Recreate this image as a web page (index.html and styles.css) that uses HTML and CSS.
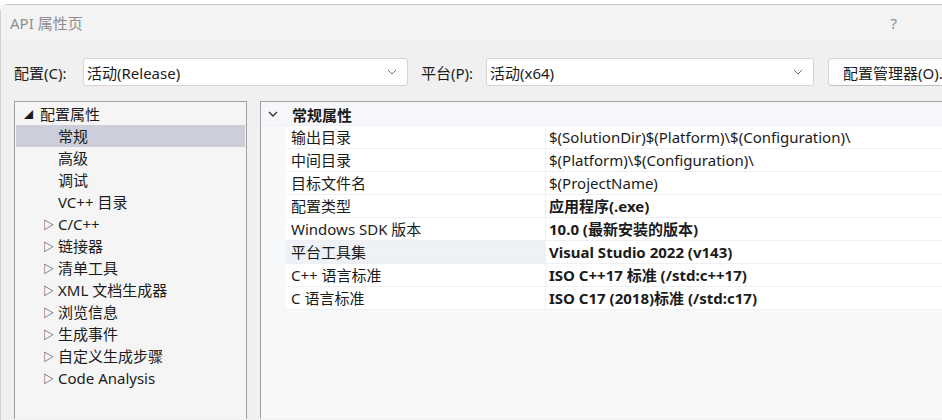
FILE: index.html
```html
<!DOCTYPE html>
<html lang="zh-CN">
<head>
    <meta charset="UTF-8">
    <title>API 属性页</title>
    <link rel="stylesheet" href="styles.css">
</head>
<body>
    <div class="window">
        <div class="titlebar">
            <span class="title">API 属性页</span>
            <span class="help">?</span>
        </div>

        <div class="config-row">
            <label class="field-label">配置(C):</label>
            <div class="combo combo-config">
                <span>活动(Release)</span>
                <svg class="chevron" width="10" height="6" viewBox="0 0 10 6"><path d="M1 1 L5 5 L9 1" fill="none" stroke="#707070" stroke-width="1"/></svg>
            </div>
            <label class="field-label">平台(P):</label>
            <div class="combo combo-platform">
                <span>活动(x64)</span>
                <svg class="chevron" width="10" height="6" viewBox="0 0 10 6"><path d="M1 1 L5 5 L9 1" fill="none" stroke="#707070" stroke-width="1"/></svg>
            </div>
            <button class="manager-button">配置管理器(O)...</button>
        </div>

        <div class="panels">
            <div class="tree">
                <div class="tree-item root"><span class="arrow-open">◢</span>配置属性</div>
                <div class="tree-item leaf selected">常规</div>
                <div class="tree-item leaf">高级</div>
                <div class="tree-item leaf">调试</div>
                <div class="tree-item leaf">VC++ 目录</div>
                <div class="tree-item node"><span class="arrow-closed">▷</span>C/C++</div>
                <div class="tree-item node"><span class="arrow-closed">▷</span>链接器</div>
                <div class="tree-item node"><span class="arrow-closed">▷</span>清单工具</div>
                <div class="tree-item node"><span class="arrow-closed">▷</span>XML 文档生成器</div>
                <div class="tree-item node"><span class="arrow-closed">▷</span>浏览信息</div>
                <div class="tree-item node"><span class="arrow-closed">▷</span>生成事件</div>
                <div class="tree-item node"><span class="arrow-closed">▷</span>自定义生成步骤</div>
                <div class="tree-item node"><span class="arrow-closed">▷</span>Code Analysis</div>
            </div>

            <div class="grid">
                <div class="group-header">
                    <svg class="group-chevron" width="10" height="6" viewBox="0 0 10 6"><path d="M1 1 L5 5 L9 1" fill="none" stroke="#333" stroke-width="1.3"/></svg>
                    <span>常规属性</span>
                </div>
                <div class="prop-row">
                    <div class="prop-name">输出目录</div>
                    <div class="prop-value">$(SolutionDir)$(Platform)\$(Configuration)\</div>
                </div>
                <div class="prop-row">
                    <div class="prop-name">中间目录</div>
                    <div class="prop-value">$(Platform)\$(Configuration)\</div>
                </div>
                <div class="prop-row">
                    <div class="prop-name">目标文件名</div>
                    <div class="prop-value">$(ProjectName)</div>
                </div>
                <div class="prop-row">
                    <div class="prop-name">配置类型</div>
                    <div class="prop-value bold">应用程序(.exe)</div>
                </div>
                <div class="prop-row">
                    <div class="prop-name">Windows SDK 版本</div>
                    <div class="prop-value bold">10.0 (最新安装的版本)</div>
                </div>
                <div class="prop-row active">
                    <div class="prop-name">平台工具集</div>
                    <div class="prop-value bold">Visual Studio 2022 (v143)</div>
                </div>
                <div class="prop-row">
                    <div class="prop-name">C++ 语言标准</div>
                    <div class="prop-value bold">ISO C++17 标准 (/std:c++17)</div>
                </div>
                <div class="prop-row">
                    <div class="prop-name">C 语言标准</div>
                    <div class="prop-value bold">ISO C17 (2018)标准 (/std:c17)</div>
                </div>
            </div>
        </div>
    </div>
</body>
</html>
```

FILE: styles.css
```css
html, body {
    margin: 0;
    padding: 0;
    height: 100%;
    overflow: hidden;
}
body {
    background-color: #ffffff;
    font-family: "Noto Sans", "Noto Sans CJK SC", sans-serif;
    font-size: 15px;
    color: #1b1b1b;
}
.window {
    margin-top: 4px;
    height: 416px;
    background-color: #f0f0f0;
    border-top: 1px solid #c8c8c8;
    border-left: 1px solid #d0d0d0;
    border-top-left-radius: 8px;
    box-sizing: border-box;
}
.titlebar {
    display: flex;
    align-items: center;
    justify-content: space-between;
    height: 35px;
    padding: 0 45px 0 9px;
    background-color: #f3f3f3;
}
.title {
    color: #8e8e8e;
}
.help {
    color: #8e8e8e;
}
.config-row {
    display: flex;
    align-items: center;
    height: 28px;
    margin-top: 18px;
    padding-left: 13px;
    white-space: nowrap;
}
.field-label {
    width: 69px;
    flex-shrink: 0;
}
.combo {
    display: flex;
    align-items: center;
    justify-content: space-between;
    height: 28px;
    box-sizing: border-box;
    padding: 0 10px 0 3px;
    background-color: #ffffff;
    border: 1px solid #d4d4d4;
    border-radius: 3px;
    flex-shrink: 0;
}
.combo-config {
    width: 325px;
    margin-right: 13px;
}
.combo-platform {
    width: 328px;
    margin-left: -4px;
    margin-right: 14px;
}
.manager-button {
    height: 28px;
    width: 150px;
    flex-shrink: 0;
    padding: 0 0 0 14px;
    text-align: left;
    font-family: inherit;
    font-size: 15px;
    color: #1b1b1b;
    background-color: #fdfdfd;
    border: 1px solid #d4d4d4;
    border-bottom-color: #c0c0c0;
    border-radius: 4px;
}
.panels {
    display: flex;
    margin-top: 15px;
    padding-left: 13px;
    gap: 13px;
    height: 318px;
}
.tree {
    width: 233px;
    flex-shrink: 0;
    box-sizing: border-box;
    padding: 1px;
    background-color: #f5f5f5;
    border: 1px solid #a0a0a0;
    border-bottom: none;
}
.tree-item {
    height: 22px;
    line-height: 23px;
    white-space: nowrap;
}
.tree-item.root {
    padding-left: 8px;
}
.tree-item.leaf {
    padding-left: 42px;
}
.tree-item.node {
    padding-left: 27px;
}
.tree-item.selected {
    background-color: #cccfdb;
}
.arrow-open {
    display: inline-block;
    width: 16px;
    font-size: 9px;
    color: #1b1b1b;
    vertical-align: top;
}
.arrow-closed {
    display: inline-block;
    width: 15px;
    font-size: 11px;
    color: #1b1b1b;
    vertical-align: top;
}
.grid {
    flex: 1;
    box-sizing: border-box;
    padding-top: 1px;
    background-color: #f7f8fa;
    border: 1px solid #a0a0a0;
    border-right: none;
    border-bottom: none;
}
.group-header {
    display: flex;
    align-items: center;
    height: 22px;
    font-weight: bold;
    background-color: #f5f7fa;
    border-bottom: 1px solid #eef0f4;
}
.group-chevron {
    margin: 0 14px 0 7px;
}
.prop-row {
    display: flex;
    height: 22px;
    line-height: 23px;
    margin-left: 25px;
    border-bottom: 1px solid #eef0f4;
}
.prop-name {
    width: 254px;
    flex-shrink: 0;
    padding-left: 5px;
    background-color: #ffffff;
    border-right: 1px solid #eef0f4;
    white-space: nowrap;
}
.prop-value {
    flex: 1;
    padding-left: 3px;
    background-color: #ffffff;
    white-space: nowrap;
}
.prop-value.bold {
    font-weight: bold;
}
.prop-row.active .prop-name {
    background-color: #eef1f6;
}
```
